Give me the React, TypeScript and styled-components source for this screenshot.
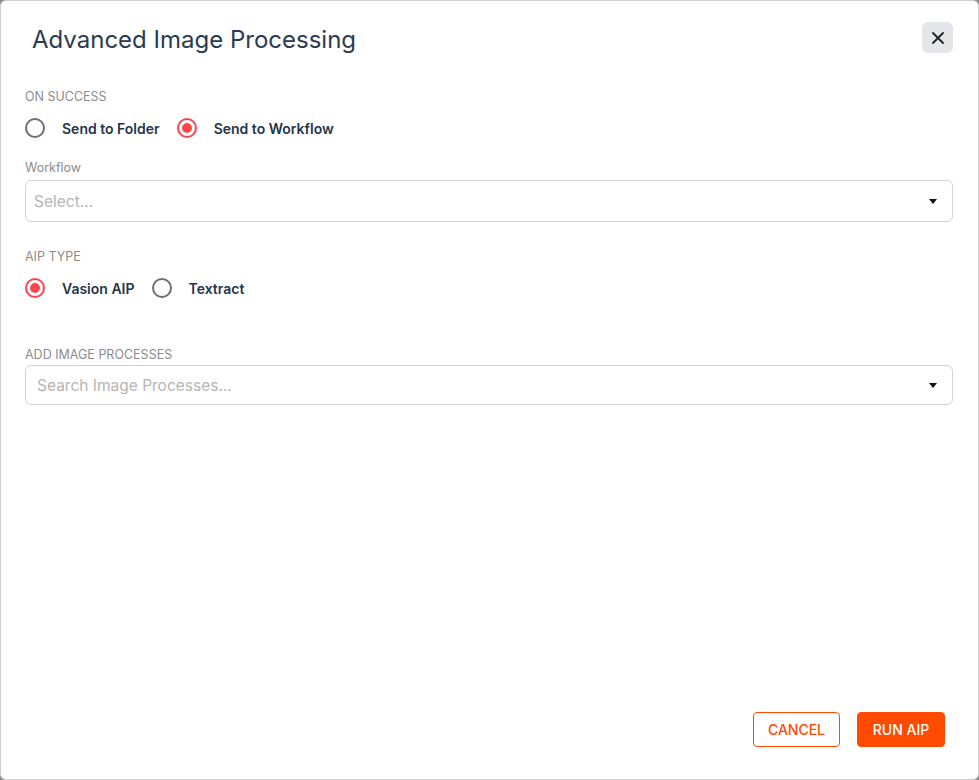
import React, { useState } from 'react';
import styled, { createGlobalStyle } from 'styled-components';

const GlobalStyle = createGlobalStyle`
  html, body {
    margin: 0;
    padding: 0;
    background: #8d8d8d;
  }
  * {
    box-sizing: border-box;
  }
`;

const Dialog = styled.div`
  width: 979px;
  height: 780px;
  background: #ffffff;
  border: 1px solid #cfcfcf;
  border-radius: 6px;
  display: flex;
  flex-direction: column;
  font-family: Inter, 'Liberation Sans', sans-serif;
  color: #2c3e50;
`;

const Header = styled.div`
  display: flex;
  justify-content: space-between;
  align-items: flex-start;
  padding: 21px 25px 0 31px;
`;

const Title = styled.h1`
  margin: 0;
  font-size: 24px;
  line-height: 29px;
  font-weight: 400;
  color: #2b3b50;
  padding-top: 3px;
`;

const CloseButton = styled.button`
  width: 31px;
  height: 31px;
  border: none;
  border-radius: 6px;
  background: #e4e6e9;
  display: flex;
  align-items: center;
  justify-content: center;
  padding: 0;
  cursor: pointer;
  color: #222;
`;

const Body = styled.div`
  flex: 1;
  display: flex;
  flex-direction: column;
  padding: 0 25px 0 24px;
`;

const Label = styled.div<{ $gap: number; $caps?: boolean }>`
  margin-top: ${(p) => p.$gap}px;
  font-size: 12.5px;
  line-height: 14px;
  color: #8c8c8c;
  text-transform: ${(p) => (p.$caps ? 'uppercase' : 'none')};
`;

const RadioGroup = styled.div`
  display: flex;
  align-items: center;
  margin-top: 14px;
  height: 20px;
`;

const RadioOption = styled.label`
  display: flex;
  align-items: center;
  gap: 17px;
  margin-right: 17px;
  cursor: pointer;
`;

const RadioCircle = styled.span<{ $checked: boolean }>`
  width: 20px;
  height: 20px;
  border-radius: 50%;
  border: 2px solid ${(p) => (p.$checked ? '#f7474c' : '#6e6e6e')};
  display: flex;
  align-items: center;
  justify-content: center;
  &::after {
    content: '';
    width: 10px;
    height: 10px;
    border-radius: 50%;
    background: #f7474c;
    display: ${(p) => (p.$checked ? 'block' : 'none')};
  }
`;

const RadioText = styled.span`
  font-size: 14px;
  font-weight: 600;
  color: #26354a;
`;

const SelectBox = styled.div<{ $height: number; $gap: number; $padLeft: number }>`
  margin-top: ${(p) => p.$gap}px;
  height: ${(p) => p.$height}px;
  border: 1px solid #d3d3d3;
  border-radius: 6px;
  display: flex;
  align-items: center;
  justify-content: space-between;
  padding: 0 15px 0 ${(p) => p.$padLeft}px;
`;

const Placeholder = styled.span`
  font-size: 15.5px;
  color: #b5b5b5;
`;

const Caret = styled.span`
  width: 0;
  height: 0;
  border-left: 4px solid transparent;
  border-right: 4px solid transparent;
  border-top: 5px solid #111;
`;

const Footer = styled.div`
  display: flex;
  justify-content: flex-end;
  gap: 17px;
  padding: 0 33px 32px 0;
`;

const Button = styled.button<{ $primary?: boolean; $width: number }>`
  height: 35px;
  width: ${(p) => p.$width}px;
  padding: 0;
  border-radius: 4px;
  border: 1px solid #ff4b00;
  background: ${(p) => (p.$primary ? '#ff4b00' : '#ffffff')};
  color: ${(p) => (p.$primary ? '#ffffff' : '#ff4b00')};
  font-family: Inter, 'Liberation Sans', sans-serif;
  font-size: 14px;
  font-weight: 500;
  text-transform: uppercase;
  cursor: pointer;
`;

interface Option {
  id: string;
  label: string;
}

function Radios({
  options,
  value,
  onChange,
}: {
  options: Option[];
  value: string;
  onChange: (v: string) => void;
}) {
  return (
    <RadioGroup>
      {options.map((o) => (
        <RadioOption key={o.id} onClick={() => onChange(o.id)}>
          <RadioCircle $checked={value === o.id} />
          <RadioText>{o.label}</RadioText>
        </RadioOption>
      ))}
    </RadioGroup>
  );
}

export default function App(): React.JSX.Element {
  const [target, setTarget] = useState('workflow');
  const [aipType, setAipType] = useState('vasion');

  return (
    <>
      <GlobalStyle />
      <Dialog>
        <Header>
          <Title>Advanced Image Processing</Title>
          <CloseButton aria-label="Close">
            <svg width="14" height="14" viewBox="0 0 14 14">
              <path d="M2 2 L12 12 M12 2 L2 12" stroke="#222" strokeWidth="1.8" strokeLinecap="round" />
            </svg>
          </CloseButton>
        </Header>
        <Body>
          <Label $gap={36} $caps>
            On Success
          </Label>
          <Radios
            options={[
              { id: 'folder', label: 'Send to Folder' },
              { id: 'workflow', label: 'Send to Workflow' },
            ]}
            value={target}
            onChange={setTarget}
          />
          <Label $gap={23}>Workflow</Label>
          <SelectBox $gap={5} $height={42} $padLeft={8}>
            <Placeholder>Select...</Placeholder>
            <Caret />
          </SelectBox>
          <Label $gap={28} $caps>
            AIP Type
          </Label>
          <Radios
            options={[
              { id: 'vasion', label: 'Vasion AIP' },
              { id: 'textract', label: 'Textract' },
            ]}
            value={aipType}
            onChange={setAipType}
          />
          <Label $gap={50} $caps>
            Add Image Processes
          </Label>
          <SelectBox $gap={3} $height={40} $padLeft={11}>
            <Placeholder>Search Image Processes...</Placeholder>
            <Caret />
          </SelectBox>
        </Body>
        <Footer>
          <Button $width={87}>Cancel</Button>
          <Button $primary $width={88}>
            Run AIP
          </Button>
        </Footer>
      </Dialog>
    </>
  );
}
